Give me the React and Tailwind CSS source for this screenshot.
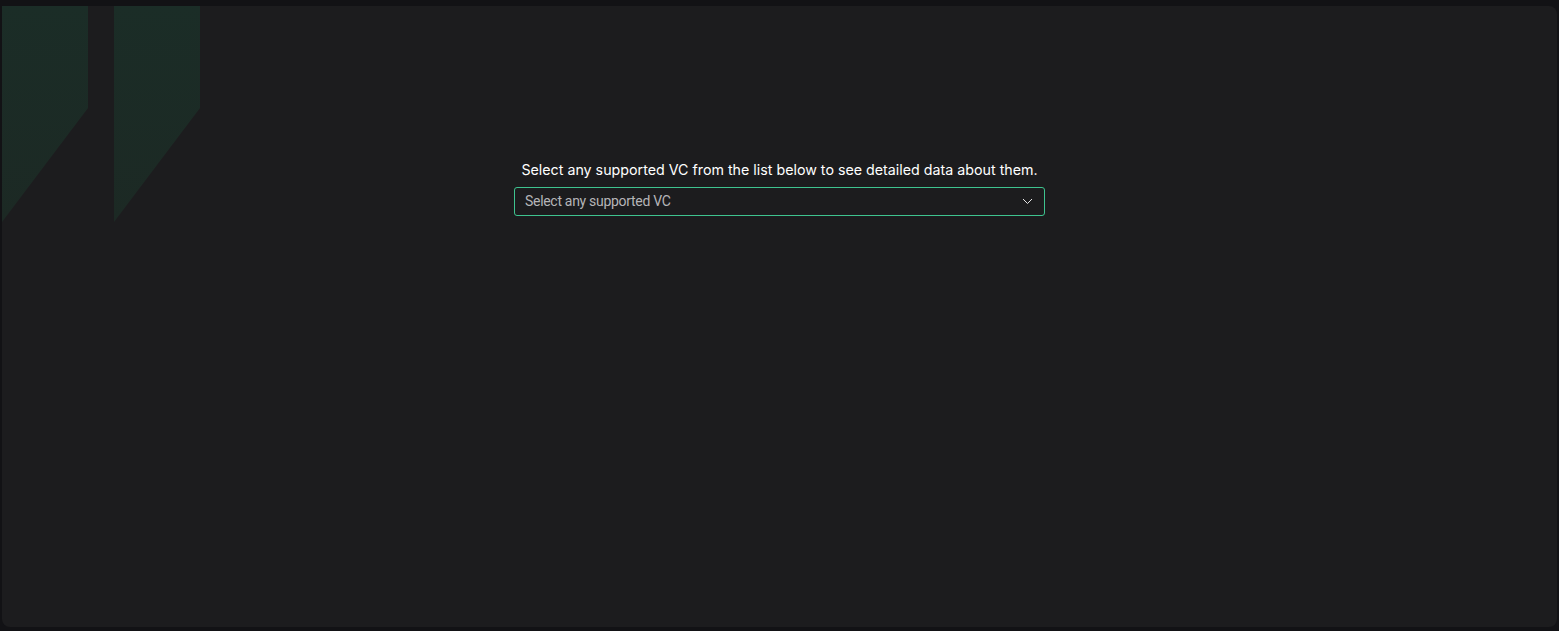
import React from "react";

function Stripe({ className }) {
  return (
    <svg
      className={className}
      width="86"
      height="216"
      viewBox="0 0 86 216"
      xmlns="http://www.w3.org/2000/svg"
    >
      <defs>
        <linearGradient id="stripeFade" x1="0" y1="0" x2="0" y2="1">
          <stop offset="0" stopColor="#1b2d27" />
          <stop offset="1" stopColor="#1c2924" />
        </linearGradient>
      </defs>
      <polygon points="0 0 86 0 86 102 0 216" fill="url(#stripeFade)" />
    </svg>
  );
}

export default function App() {
  return (
    <div className="w-full h-[631px] bg-[#121215] pt-[6px] px-[2px] pb-[4px] font-['Inter',sans-serif]">
      <div className="relative h-full bg-[#1c1c1e] rounded-b-lg rounded-tr-lg overflow-hidden">
        <div className="absolute top-0 left-0 flex gap-[26px] pointer-events-none">
          <Stripe />
          <Stripe />
        </div>

        <div className="relative flex flex-col items-center pt-[154px]">
          <p className="text-[14.25px] leading-5 text-white font-normal">
            Select any supported VC from the list below to see detailed data about them.
          </p>
          <button
            type="button"
            className="mt-[7px] w-[531px] h-[29px] flex items-center justify-between pl-[10px] pr-[11px] border border-[#3ec38f] rounded-[3px] bg-[#1c1c1e] text-left"
          >
            <span className="text-[14px] text-[#b5b5b8] font-['Roboto',sans-serif] tracking-[-0.3px]">
              Select any supported VC
            </span>
            <svg width="11" height="7" viewBox="0 0 11 7" fill="none">
              <path d="M1 1l4.5 4.5L10 1" stroke="#e5e5e5" strokeWidth="1" />
            </svg>
          </button>
        </div>
      </div>
    </div>
  );
}
